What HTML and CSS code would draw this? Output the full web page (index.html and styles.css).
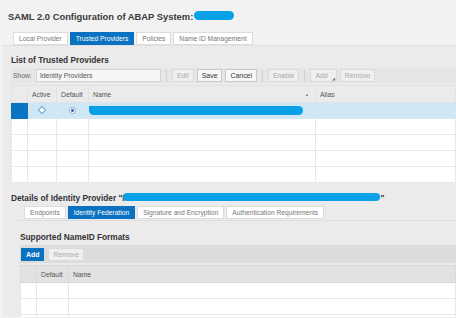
FILE: index.html
```html
<!DOCTYPE html>
<html>
<head>
<meta charset="utf-8">
<link rel="stylesheet" href="styles.css">
</head>
<body>
<div class="title">SAML 2.0 Configuration of ABAP System: <span class="redact r-title"></span></div>
<div class="tabs top-tabs">
  <span class="tab">Local Provider</span>
  <span class="tab active">Trusted Providers</span>
  <span class="tab">Policies</span>
  <span class="tab">Name ID Management</span>
</div>
<div class="panel">
  <div class="section-title">List of Trusted Providers</div>
  <div class="toolbar">
    <span class="lbl">Show:</span>
    <span class="input">Identity Providers</span>
    <span class="sep"></span>
    <span class="btn dis">Edit</span>
    <span class="btn">Save</span>
    <span class="btn">Cancel</span>
    <span class="sep"></span>
    <span class="btn dis">Enable</span>
    <span class="sep"></span>
    <span class="btn dis add">Add<span class="drop">◢</span></span>
    <span class="btn dis">Remove</span>
  </div>
  <table class="grid g1">
    <colgroup><col class="c-sel"><col class="c-act"><col class="c-def"><col class="c-name"><col></colgroup>
    <tr class="head"><td></td><td>Active</td><td>Default</td><td class="sort">Name<span class="arrow">▲</span></td><td>Alias</td></tr>
    <tr class="sel"><td class="selcell"></td><td class="ctr"><span class="diamond"></span></td><td class="ctr"><span class="radio"></span></td><td><span class="redact r-name"></span></td><td></td></tr>
    <tr><td></td><td></td><td></td><td></td><td></td></tr>
    <tr><td></td><td></td><td></td><td></td><td></td></tr>
    <tr><td></td><td></td><td></td><td></td><td></td></tr>
    <tr><td></td><td></td><td></td><td></td><td></td></tr>
  </table>
  <div class="section-title details">Details of Identity Provider "F<span class="redact r-detail"></span>"</div>
  <div class="tabs sub-tabs">
    <span class="tab">Endpoints</span>
    <span class="tab active">Identity Federation</span>
    <span class="tab">Signature and Encryption</span>
    <span class="tab">Authentication Requirements</span>
  </div>
  <div class="subpanel">
    <div class="section-title">Supported NameID Formats</div>
    <div class="toolbar2">
      <span class="btn primary">Add</span>
      <span class="btn dis">Remove</span>
    </div>
    <table class="grid g2">
      <colgroup><col class="c-sel2"><col class="c-def2"><col></colgroup>
      <tr class="head"><td></td><td>Default</td><td>Name</td></tr>
      <tr><td></td><td></td><td></td></tr>
      <tr><td></td><td></td><td></td></tr>
      <tr><td></td><td></td><td></td></tr>
    </table>
  </div>
</div>
</body>
</html>
```
FILE: styles.css
```css
html, body { margin: 0; padding: 0; }
body {
  width: 456px;
  height: 318px;
  overflow: hidden;
  background: #f2f2f2;
  font-family: "Liberation Sans", Arial, sans-serif;
  color: #333;
  font-size: 7px;
}
.title {
  padding: 8px 0 0 8px;
  height: 16px;
  font-size: 9.4px;
  font-weight: bold;
  color: #3a3a3a;
  display: flex;
  align-items: center;
  gap: 1px;
}
.redact {
  display: inline-block;
  background: #08a0e6;
  border-radius: 6px;
}
.r-title { width: 40px; height: 9px; border-radius: 5px; margin-top: -2px; }
.tabs { display: flex; gap: 2px; }
.top-tabs { margin: 8px 0 0 13px; height: 13px; }
.tab {
  display: flex;
  align-items: center;
  padding: 0 5px;
  background: #fff;
  border: 1px solid #dcdcdc;
  color: #777;
  font-size: 6.7px;
  white-space: nowrap;
}
.tab.active { background: #0a72c0; border-color: #0a72c0; color: #fff; }
.panel {
  margin-left: 3px;
  background: #ebebeb;
  border-top: 1px solid #e0e0e0;
  padding: 9px 0 0 8px;
  height: 262px;
  overflow: hidden;
}
.section-title {
  font-weight: bold;
  font-size: 8.3px;
  color: #333;
  height: 10px;
  display: flex;
  align-items: center;
  white-space: nowrap;
}
.toolbar {
  margin-top: 3px;
  height: 15px;
  display: flex;
  align-items: center;
  gap: 3px;
  background: #e6e6e6;
  padding-left: 2px;
}
.lbl { color: #666; font-size: 6.8px; margin-right: 1px; }
.input {
  width: 120px;
  height: 11px;
  background: #f6f6f6;
  border: 1px solid #d4d4d4;
  display: flex;
  align-items: center;
  padding-left: 3px;
  color: #555;
  font-size: 6.8px;
}
.sep { width: 1px; height: 12px; background: #d0d0d0; margin: 0 2px; }
.btn {
  height: 11px;
  display: flex;
  align-items: center;
  padding: 0 4px;
  border: 1px solid #c8c8c8;
  background: #f7f7f7;
  color: #333;
  font-size: 6.9px;
}
.btn.dis { color: #aaa; border-color: #dadada; background: #efefef; }
.btn.add { position: relative; padding-right: 8px; }
.drop { position: absolute; right: 1px; bottom: 0; font-size: 4px; color: #777; }
.btn.primary { background: #0a72c0; border-color: #0a72c0; color: #fff; font-weight: bold; }
.grid {
  border-collapse: collapse;
  table-layout: fixed;
  width: 445px;
  margin-top: 2px;
}
.grid td {
  height: 15px;
  padding: 0 0 0 4px;
  border: 1px solid #e8e8e8;
  background: #fff;
  font-size: 6.8px;
  color: #555;
  white-space: nowrap;
  overflow: hidden;
  vertical-align: middle;
}
.grid tr.head td { background: #ebebeb; border-color: #e2e2e2; height: 16px; }
.c-sel { width: 16px; }
.c-act { width: 29px; }
.c-def { width: 32px; }
.c-name { width: 227px; }
.sort { position: relative; }
.arrow { position: absolute; right: 6px; top: 6px; font-size: 4px; color: #777; }
.grid tr.sel td { background: #cfe6f4; border-color: #d8e8f2; }
.grid tr.sel td.selcell { background: #0a74c2; border-color: #0a74c2; }
.ctr { text-align: center; padding: 0 !important; }
.diamond {
  display: inline-block;
  width: 4px; height: 4px;
  border: 1px solid #5aa8dc;
  background: #fff;
  transform: rotate(45deg);
}
.radio {
  display: inline-block;
  width: 5px; height: 5px;
  border-radius: 50%;
  border: 1px solid #9ab;
  background: radial-gradient(circle, #1a6bb0 0 1.2px, #fff 1.6px);
}
.r-name { width: 214px; height: 9px; margin-left: -4px; display: block; border-radius: 0 5px 5px 5px; }
.details { margin-top: 10px; }
.r-detail { width: 257px; height: 8px; border-radius: 5px; margin-left: -4px; margin-top: -3px; }
.sub-tabs { margin: 3px 0 0 13px; height: 13px; }
.subpanel {
  margin: 1px 0 0 7px;
  background: #ebebeb;
  border-top: 1px solid #dedede;
  padding: 11px 0 0 2px;
  height: 110px;
}
.toolbar2 {
  margin-top: 3px;
  height: 18px;
  display: flex;
  align-items: center;
  gap: 4px;
  background: #dcdcdc;
  padding-left: 1px;
}
.g2 { width: 436px; margin-top: 2px; }
.c-sel2 { width: 16px; }
.c-def2 { width: 32px; }
.g2 tr.head td { background: #e2e2e2; border-color: #d9d9d9; }
```
